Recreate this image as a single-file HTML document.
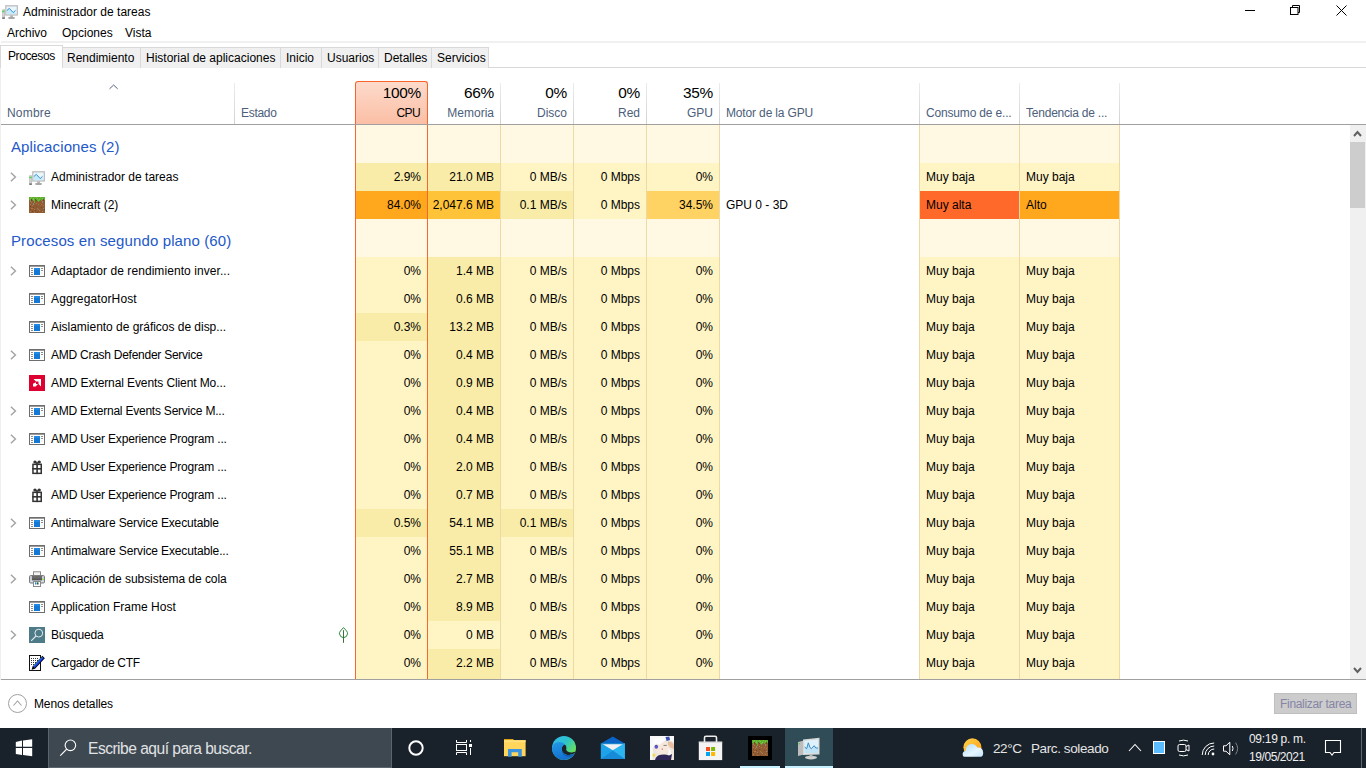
<!DOCTYPE html>
<html><head><meta charset="utf-8"><title>Administrador de tareas</title>
<style>
*{box-sizing:border-box}
html,body{margin:0;padding:0}
body{width:1366px;height:768px;overflow:hidden;position:relative;background:#fff;font-family:"Liberation Sans",sans-serif;font-size:12px;color:#000}
.a{position:absolute;white-space:nowrap}
#lb{position:absolute;left:0;top:68px;width:1px;height:612px;background:#efefef}
.title{left:23px;top:5px;line-height:14px;font-size:12px}
.menu{top:26px;line-height:14px}
#sep{position:absolute;left:1px;top:41px;width:1365px;height:2px;background:#f0f0f0}
.tab{position:absolute;top:47px;height:21px;background:#f0f0f0;border:1px solid #d9d9d9;border-bottom:none;line-height:21px;padding-left:5px}
.tab.act{top:45px;height:23px;background:#fff;line-height:20px;letter-spacing:-0.4px}
#tabline{position:absolute;left:1px;top:67px;width:1365px;height:1px;background:#d9d9d9}
.hd{position:absolute;top:83px;width:1px;height:41px;background:linear-gradient(#ececec,#d2d2d2)}
.hl{position:absolute;top:106px;line-height:14px;color:#4c607a}
.hp{position:absolute;top:85px;line-height:16px;font-size:15.4px;letter-spacing:-0.3px;color:#000;text-align:right}
#hline{position:absolute;left:1px;top:124px;width:1365px;height:1px;background:#a0a0a0}
#cpuh{position:absolute;left:355px;top:81px;width:73px;height:44px;border:1px solid #f8632a;border-bottom:none;border-radius:3px 3px 0 0;background:linear-gradient(#fddacb,#fbbea4)}
.row,.sec{position:absolute;left:0;width:1350px;height:28px}
.sec{height:38px}
.st{position:absolute;left:11px;top:13px;letter-spacing:0.12px;font-size:15px;line-height:17px;color:#2358c9}
.exp{position:absolute;left:9.5px;top:9px}
.ico{position:absolute;left:29px;top:6px;width:16px;height:16px}
.ico svg{display:block}
.nm{position:absolute;left:51px;top:7px;line-height:14px;white-space:nowrap}
.leaf{position:absolute;left:338px;top:6px}
.eng{position:absolute;left:726px;top:7px;line-height:14px}
.c{position:absolute;top:0;height:100%;font-style:normal;line-height:28px;text-align:right;padding-right:6px;white-space:nowrap}
.cpu{left:356px;width:71px}
.mem{left:428px;width:72px}
.dsk{left:501px;width:72px}
.net{left:574px;width:72px}
.gpu{left:647px;width:72px}
.con{left:920px;width:99px;text-align:left;padding-left:6px}
.ten{left:1020px;width:99px;text-align:left;padding-left:6px}
.vl{position:absolute;top:125px;height:554px;width:1px;background:#ecd9a4}
.vo{position:absolute;top:125px;height:554px;width:1px;background:#f8672b}
#tbl{position:absolute;left:0;top:0;width:1366px;height:679px;overflow:hidden}
#bline{position:absolute;left:1px;top:679px;width:1365px;height:1px;background:#a0a0a0}
#sb{position:absolute;left:1350px;top:125px;width:16px;height:554px;background:#f0f0f0}
#thumb{position:absolute;left:1350px;top:142px;width:15px;height:66px;background:#cdcdcd}
#taskbar{position:absolute;left:0;top:728px;width:1366px;height:40px;background:#19212a}
.tw{color:#fff}
</style></head><body>
<div id="lb"></div>
<!-- title bar -->
<svg class="a" style="left:2px;top:3px" width="16" height="16" viewBox="0 0 16 16"><rect x="3.8" y="2.8" width="11.5" height="9.2" fill="#e9f6fc" stroke="#b8b8b8" stroke-width="1.2"/><path d="M4.7 7.6 L7.3 5.3 L11.2 9.4 L13.6 7.4 V11.2 H4.7 Z" fill="#c4e9fa"/><path d="M4.8 7.6 L7.3 5.35 L11.2 9.5 L13.5 7.4" fill="none" stroke="#2a86c6" stroke-width="0.9"/><rect x="8.2" y="12.4" width="2.7" height="1.9" fill="#b0b0b0"/><rect x="6.2" y="14.1" width="6.7" height="1.8" rx="0.8" fill="#a8a8a8"/><rect x="0.2" y="6.2" width="2.7" height="9.7" rx="0.8" fill="#b9b9b9"/><rect x="0.8" y="6.6" width="1.4" height="8.4" fill="#d4d4d4"/><rect x="0.5" y="7.7" width="2" height="1.5" fill="#33dd33"/><rect x="0.3" y="14.4" width="2.5" height="1.5" fill="#707070"/></svg>
<div class="a title">Administrador de tareas</div>
<svg class="a" style="left:1245px;top:10px" width="10" height="1"><rect x="0" y="0" width="10" height="1" fill="#000"/></svg>
<svg class="a" style="left:1290px;top:5px" width="10" height="10" viewBox="0 0 10 10"><path d="M2.5 2 V0.5 H9.5 V7.5 H8" fill="none" stroke="#000" stroke-width="1"/><rect x="0.5" y="2.5" width="7.5" height="7" fill="#fff" stroke="#000" stroke-width="1"/></svg>
<svg class="a" style="left:1336px;top:5px" width="11" height="11" viewBox="0 0 11 11"><path d="M0.5 0.5 L10.5 10.5 M10.5 0.5 L0.5 10.5" stroke="#000" stroke-width="1"/></svg>
<!-- menu -->
<div class="a menu" style="left:7px">Archivo</div>
<div class="a menu" style="left:62px">Opciones</div>
<div class="a menu" style="left:125px">Vista</div>
<div id="sep"></div>
<!-- tabs -->
<div id="tabline"></div>
<div class="tab" style="left:62px;width:79px;padding-left:4px">Rendimiento</div>
<div class="tab" style="left:140px;width:141px">Historial de aplicaciones</div>
<div class="tab" style="left:280px;width:42px">Inicio</div>
<div class="tab" style="left:321px;width:58px">Usuarios</div>
<div class="tab" style="left:378px;width:54px">Detalles</div>
<div class="tab" style="left:431px;width:58px">Servicios</div>
<div class="tab act" style="left:0px;width:63px;padding-left:7px">Procesos</div>

<div id="tbl">
<!-- header -->
<div id="cpuh"></div>
<svg class="a" style="left:109px;top:84px" width="10" height="6" viewBox="0 0 10 6"><path d="M0.5 4.9 L4.6 1 L8.7 4.9" fill="none" stroke="#56637e" stroke-width="1"/></svg>
<div class="hl" style="left:7px;letter-spacing:0.2px">Nombre</div>
<div class="hd" style="left:234px"></div>
<div class="hl" style="left:241px;letter-spacing:-0.3px">Estado</div>
<div class="hp" style="left:356px;width:65px">100%</div>
<div class="hl" style="left:356px;width:64px;text-align:right;color:#000;letter-spacing:-0.6px">CPU</div>
<div class="hp" style="left:428px;width:66px">66%</div>
<div class="hl" style="left:428px;width:66px;text-align:right">Memoria</div>
<div class="hd" style="left:500px"></div>
<div class="hp" style="left:501px;width:66px">0%</div>
<div class="hl" style="left:501px;width:66px;text-align:right">Disco</div>
<div class="hd" style="left:573px"></div>
<div class="hp" style="left:574px;width:66px">0%</div>
<div class="hl" style="left:574px;width:66px;text-align:right">Red</div>
<div class="hd" style="left:646px"></div>
<div class="hp" style="left:647px;width:66px">35%</div>
<div class="hl" style="left:647px;width:66px;text-align:right">GPU</div>
<div class="hd" style="left:719px"></div>
<div class="hl" style="left:726px;letter-spacing:-0.15px">Motor de la GPU</div>
<div class="hd" style="left:919px"></div>
<div class="hl" style="left:926px;letter-spacing:-0.17px">Consumo de e...</div>
<div class="hd" style="left:1019px"></div>
<div class="hl" style="left:1026px;letter-spacing:-0.22px">Tendencia de ...</div>
<div class="hd" style="left:1119px"></div>
<div id="hline"></div>
<!-- rows -->
<div class="sec" style="top:125px"><span class="st">Aplicaciones (2)</span><i class="c cpu" style="background:#FFF8E2"></i><i class="c mem" style="background:#FFF8E2"></i><i class="c dsk" style="background:#FFF8E2"></i><i class="c net" style="background:#FFF8E2"></i><i class="c gpu" style="background:#FFF8E2"></i><i class="c con" style="background:#FFF8E2"></i><i class="c ten" style="background:#FFF8E2"></i></div>
<div class="row" style="top:163px"><svg class="exp" width="7" height="10" viewBox="0 0 7 10"><path d="M0.9 0.8 L5.4 5 L0.9 9.2" fill="none" stroke="#a6a6a6" stroke-width="1.5"/></svg><span class="ico"><svg width="16" height="16" viewBox="0 0 16 16"><rect x="3.8" y="2.8" width="11.5" height="9.2" fill="#e9f6fc" stroke="#b8b8b8" stroke-width="1.2"/><path d="M4.7 7.6 L7.3 5.3 L11.2 9.4 L13.6 7.4 V11.2 H4.7 Z" fill="#c4e9fa"/><path d="M4.8 7.6 L7.3 5.35 L11.2 9.5 L13.5 7.4" fill="none" stroke="#2a86c6" stroke-width="0.9"/><rect x="8.2" y="12.4" width="2.7" height="1.9" fill="#b0b0b0"/><rect x="6.2" y="14.1" width="6.7" height="1.8" rx="0.8" fill="#a8a8a8"/><rect x="0.2" y="6.2" width="2.7" height="9.7" rx="0.8" fill="#b9b9b9"/><rect x="0.8" y="6.6" width="1.4" height="8.4" fill="#d4d4d4"/><rect x="0.5" y="7.7" width="2" height="1.5" fill="#33dd33"/><rect x="0.3" y="14.4" width="2.5" height="1.5" fill="#707070"/></svg></span><span class="nm">Administrador de tareas</span><i class="c cpu" style="background:#F9ECA8">2.9%</i><i class="c mem" style="background:#F9ECA8">21.0 MB</i><i class="c dsk" style="background:#FFF4C4">0 MB/s</i><i class="c net" style="background:#FFF4C4">0 Mbps</i><i class="c gpu" style="background:#FFF4C4">0%</i><i class="c con" style="background:#FFF4C4">Muy baja</i><i class="c ten" style="background:#FFF4C4">Muy baja</i></div>
<div class="row" style="top:191px"><svg class="exp" width="7" height="10" viewBox="0 0 7 10"><path d="M0.9 0.8 L5.4 5 L0.9 9.2" fill="none" stroke="#a6a6a6" stroke-width="1.5"/></svg><span class="ico"><svg width="16" height="16" viewBox="0 0 16 16" shape-rendering="crispEdges"><rect width="16" height="16" fill="#8f5c33"/><rect x="0" y="0" width="1" height="1" fill="#5fae30"/><rect x="1" y="0" width="1" height="1" fill="#5fae30"/><rect x="2" y="0" width="1" height="1" fill="#78c640"/><rect x="3" y="0" width="1" height="1" fill="#5fae30"/><rect x="4" y="0" width="1" height="1" fill="#5fae30"/><rect x="5" y="0" width="1" height="1" fill="#5fae30"/><rect x="6" y="0" width="1" height="1" fill="#5fae30"/><rect x="7" y="0" width="1" height="1" fill="#78c640"/><rect x="8" y="0" width="1" height="1" fill="#5fae30"/><rect x="9" y="0" width="1" height="1" fill="#5fae30"/><rect x="10" y="0" width="1" height="1" fill="#5fae30"/><rect x="11" y="0" width="1" height="1" fill="#78c640"/><rect x="12" y="0" width="1" height="1" fill="#5fae30"/><rect x="13" y="0" width="1" height="1" fill="#5fae30"/><rect x="14" y="0" width="1" height="1" fill="#5fae30"/><rect x="15" y="0" width="1" height="1" fill="#5fae30"/><rect x="0" y="1" width="1" height="1" fill="#5fae30"/><rect x="1" y="1" width="1" height="1" fill="#78c640"/><rect x="2" y="1" width="1" height="1" fill="#5fae30"/><rect x="3" y="1" width="1" height="1" fill="#5fae30"/><rect x="4" y="1" width="1" height="1" fill="#78c640"/><rect x="5" y="1" width="1" height="1" fill="#5fae30"/><rect x="6" y="1" width="1" height="1" fill="#5fae30"/><rect x="7" y="1" width="1" height="1" fill="#5fae30"/><rect x="8" y="1" width="1" height="1" fill="#78c640"/><rect x="9" y="1" width="1" height="1" fill="#5fae30"/><rect x="10" y="1" width="1" height="1" fill="#5fae30"/><rect x="11" y="1" width="1" height="1" fill="#5fae30"/><rect x="12" y="1" width="1" height="1" fill="#5fae30"/><rect x="13" y="1" width="1" height="1" fill="#78c640"/><rect x="14" y="1" width="1" height="1" fill="#5fae30"/><rect x="15" y="1" width="1" height="1" fill="#5fae30"/><rect x="0" y="2" width="1" height="1" fill="#5fae30"/><rect x="1" y="2" width="1" height="1" fill="#5fae30"/><rect x="2" y="2" width="1" height="1" fill="#74492a"/><rect x="3" y="2" width="1" height="1" fill="#5fae30"/><rect x="4" y="2" width="1" height="1" fill="#78c640"/><rect x="5" y="2" width="1" height="1" fill="#5fae30"/><rect x="6" y="2" width="1" height="1" fill="#74492a"/><rect x="7" y="2" width="1" height="1" fill="#5fae30"/><rect x="8" y="2" width="1" height="1" fill="#5fae30"/><rect x="9" y="2" width="1" height="1" fill="#5fae30"/><rect x="10" y="2" width="1" height="1" fill="#78c640"/><rect x="11" y="2" width="1" height="1" fill="#5fae30"/><rect x="12" y="2" width="1" height="1" fill="#5fae30"/><rect x="13" y="2" width="1" height="1" fill="#5fae30"/><rect x="14" y="2" width="1" height="1" fill="#74492a"/><rect x="15" y="2" width="1" height="1" fill="#5fae30"/><rect x="1" y="3" width="1" height="1" fill="#5fae30"/><rect x="2" y="3" width="1" height="1" fill="#74492a"/><rect x="4" y="3" width="1" height="1" fill="#5fae30"/><rect x="5" y="3" width="1" height="1" fill="#5fae30"/><rect x="7" y="3" width="1" height="1" fill="#74492a"/><rect x="8" y="3" width="1" height="1" fill="#5fae30"/><rect x="9" y="3" width="1" height="1" fill="#78c640"/><rect x="10" y="3" width="1" height="1" fill="#5fae30"/><rect x="12" y="3" width="1" height="1" fill="#5fae30"/><rect x="14" y="3" width="1" height="1" fill="#74492a"/><rect x="1" y="4" width="1" height="1" fill="#8a8488"/><rect x="5" y="4" width="1" height="1" fill="#5fae30"/><rect x="9" y="4" width="1" height="1" fill="#5fae30"/><rect x="13" y="4" width="1" height="1" fill="#8a8488"/><rect x="2" y="5" width="1" height="1" fill="#b5743f"/><rect x="5" y="5" width="1" height="1" fill="#5fae30"/><rect x="13" y="5" width="1" height="1" fill="#8a8488"/><rect x="4" y="6" width="1" height="1" fill="#8a8488"/><rect x="7" y="6" width="1" height="1" fill="#b5743f"/><rect x="1" y="7" width="1" height="1" fill="#b5743f"/><rect x="4" y="7" width="1" height="1" fill="#8a8488"/><rect x="9" y="7" width="1" height="1" fill="#b5743f"/><rect x="12" y="7" width="1" height="1" fill="#b5743f"/><rect x="3" y="8" width="1" height="1" fill="#b5743f"/><rect x="14" y="8" width="1" height="1" fill="#b5743f"/><rect x="1" y="9" width="1" height="1" fill="#74492a"/><rect x="7" y="9" width="1" height="1" fill="#74492a"/><rect x="4" y="10" width="1" height="1" fill="#74492a"/><rect x="12" y="10" width="1" height="1" fill="#74492a"/><rect x="2" y="11" width="1" height="1" fill="#b5743f"/><rect x="3" y="11" width="1" height="1" fill="#b5743f"/><rect x="8" y="11" width="1" height="1" fill="#b5743f"/><rect x="14" y="11" width="1" height="1" fill="#8a8488"/><rect x="1" y="12" width="1" height="1" fill="#74492a"/><rect x="5" y="12" width="1" height="1" fill="#b5743f"/><rect x="9" y="12" width="1" height="1" fill="#8a8488"/><rect x="15" y="12" width="1" height="1" fill="#74492a"/><rect x="6" y="13" width="1" height="1" fill="#74492a"/><rect x="10" y="13" width="1" height="1" fill="#b5743f"/><rect x="1" y="14" width="1" height="1" fill="#b5743f"/><rect x="3" y="14" width="1" height="1" fill="#74492a"/><rect x="13" y="14" width="1" height="1" fill="#b5743f"/><rect x="5" y="15" width="1" height="1" fill="#b5743f"/><rect x="8" y="15" width="1" height="1" fill="#74492a"/></svg></span><span class="nm">Minecraft (2)</span><i class="c cpu" style="background:#FFA71D">84.0%</i><i class="c mem" style="background:#FFC33A">2,047.6 MB</i><i class="c dsk" style="background:#F9ECA8">0.1 MB/s</i><i class="c net" style="background:#FFF4C4">0 Mbps</i><i class="c gpu" style="background:#FFD264">34.5%</i><span class="eng">GPU 0 - 3D</span><i class="c con" style="background:#FF6A2A">Muy alta</i><i class="c ten" style="background:#FFA71D">Alto</i></div>
<div class="sec" style="top:219px"><span class="st">Procesos en segundo plano (60)</span><i class="c cpu" style="background:#FFF8E2"></i><i class="c mem" style="background:#FFF8E2"></i><i class="c dsk" style="background:#FFF8E2"></i><i class="c net" style="background:#FFF8E2"></i><i class="c gpu" style="background:#FFF8E2"></i><i class="c con" style="background:#FFF8E2"></i><i class="c ten" style="background:#FFF8E2"></i></div>
<div class="row" style="top:257px"><svg class="exp" width="7" height="10" viewBox="0 0 7 10"><path d="M0.9 0.8 L5.4 5 L0.9 9.2" fill="none" stroke="#a6a6a6" stroke-width="1.5"/></svg><span class="ico"><svg width="16" height="16" viewBox="0 0 16 16" shape-rendering="crispEdges"><rect x="0" y="2" width="16" height="12" fill="#6e6e6e"/><rect x="1" y="4" width="14" height="9" fill="#fff"/><rect x="1" y="3" width="14" height="1" fill="#9a9a9a"/><rect x="5" y="5" width="6" height="7" fill="#1479d6"/><rect x="5" y="5" width="6" height="2" fill="#2288e2"/><rect x="2" y="5" width="2" height="1" fill="#8c8c8c"/><rect x="2" y="7" width="2" height="1" fill="#8c8c8c"/><rect x="2" y="9" width="2" height="1" fill="#8c8c8c"/><rect x="2" y="11" width="2" height="1" fill="#8c8c8c"/><rect x="12" y="5" width="2" height="1" fill="#8c8c8c"/><rect x="12" y="7" width="2" height="1" fill="#8c8c8c"/><rect x="12" y="9" width="2" height="2" fill="#f4f4f4"/></svg></span><span class="nm" style="letter-spacing:0.072px">Adaptador de rendimiento inver...</span><i class="c cpu" style="background:#FFF4C4">0%</i><i class="c mem" style="background:#F9ECA8">1.4 MB</i><i class="c dsk" style="background:#FFF4C4">0 MB/s</i><i class="c net" style="background:#FFF4C4">0 Mbps</i><i class="c gpu" style="background:#FFF4C4">0%</i><i class="c con" style="background:#FFF4C4">Muy baja</i><i class="c ten" style="background:#FFF4C4">Muy baja</i></div>
<div class="row" style="top:285px"><span class="ico"><svg width="16" height="16" viewBox="0 0 16 16" shape-rendering="crispEdges"><rect x="0" y="2" width="16" height="12" fill="#6e6e6e"/><rect x="1" y="4" width="14" height="9" fill="#fff"/><rect x="1" y="3" width="14" height="1" fill="#9a9a9a"/><rect x="5" y="5" width="6" height="7" fill="#1479d6"/><rect x="5" y="5" width="6" height="2" fill="#2288e2"/><rect x="2" y="5" width="2" height="1" fill="#8c8c8c"/><rect x="2" y="7" width="2" height="1" fill="#8c8c8c"/><rect x="2" y="9" width="2" height="1" fill="#8c8c8c"/><rect x="2" y="11" width="2" height="1" fill="#8c8c8c"/><rect x="12" y="5" width="2" height="1" fill="#8c8c8c"/><rect x="12" y="7" width="2" height="1" fill="#8c8c8c"/><rect x="12" y="9" width="2" height="2" fill="#f4f4f4"/></svg></span><span class="nm" style="letter-spacing:0.123px">AggregatorHost</span><i class="c cpu" style="background:#FFF4C4">0%</i><i class="c mem" style="background:#F9ECA8">0.6 MB</i><i class="c dsk" style="background:#FFF4C4">0 MB/s</i><i class="c net" style="background:#FFF4C4">0 Mbps</i><i class="c gpu" style="background:#FFF4C4">0%</i><i class="c con" style="background:#FFF4C4">Muy baja</i><i class="c ten" style="background:#FFF4C4">Muy baja</i></div>
<div class="row" style="top:313px"><span class="ico"><svg width="16" height="16" viewBox="0 0 16 16" shape-rendering="crispEdges"><rect x="0" y="2" width="16" height="12" fill="#6e6e6e"/><rect x="1" y="4" width="14" height="9" fill="#fff"/><rect x="1" y="3" width="14" height="1" fill="#9a9a9a"/><rect x="5" y="5" width="6" height="7" fill="#1479d6"/><rect x="5" y="5" width="6" height="2" fill="#2288e2"/><rect x="2" y="5" width="2" height="1" fill="#8c8c8c"/><rect x="2" y="7" width="2" height="1" fill="#8c8c8c"/><rect x="2" y="9" width="2" height="1" fill="#8c8c8c"/><rect x="2" y="11" width="2" height="1" fill="#8c8c8c"/><rect x="12" y="5" width="2" height="1" fill="#8c8c8c"/><rect x="12" y="7" width="2" height="1" fill="#8c8c8c"/><rect x="12" y="9" width="2" height="2" fill="#f4f4f4"/></svg></span><span class="nm" style="letter-spacing:-0.027px">Aislamiento de gráficos de disp...</span><i class="c cpu" style="background:#F9ECA8">0.3%</i><i class="c mem" style="background:#F9ECA8">13.2 MB</i><i class="c dsk" style="background:#FFF4C4">0 MB/s</i><i class="c net" style="background:#FFF4C4">0 Mbps</i><i class="c gpu" style="background:#FFF4C4">0%</i><i class="c con" style="background:#FFF4C4">Muy baja</i><i class="c ten" style="background:#FFF4C4">Muy baja</i></div>
<div class="row" style="top:341px"><svg class="exp" width="7" height="10" viewBox="0 0 7 10"><path d="M0.9 0.8 L5.4 5 L0.9 9.2" fill="none" stroke="#a6a6a6" stroke-width="1.5"/></svg><span class="ico"><svg width="16" height="16" viewBox="0 0 16 16" shape-rendering="crispEdges"><rect x="0" y="2" width="16" height="12" fill="#6e6e6e"/><rect x="1" y="4" width="14" height="9" fill="#fff"/><rect x="1" y="3" width="14" height="1" fill="#9a9a9a"/><rect x="5" y="5" width="6" height="7" fill="#1479d6"/><rect x="5" y="5" width="6" height="2" fill="#2288e2"/><rect x="2" y="5" width="2" height="1" fill="#8c8c8c"/><rect x="2" y="7" width="2" height="1" fill="#8c8c8c"/><rect x="2" y="9" width="2" height="1" fill="#8c8c8c"/><rect x="2" y="11" width="2" height="1" fill="#8c8c8c"/><rect x="12" y="5" width="2" height="1" fill="#8c8c8c"/><rect x="12" y="7" width="2" height="1" fill="#8c8c8c"/><rect x="12" y="9" width="2" height="2" fill="#f4f4f4"/></svg></span><span class="nm" style="letter-spacing:-0.256px">AMD Crash Defender Service</span><i class="c cpu" style="background:#FFF4C4">0%</i><i class="c mem" style="background:#F9ECA8">0.4 MB</i><i class="c dsk" style="background:#FFF4C4">0 MB/s</i><i class="c net" style="background:#FFF4C4">0 Mbps</i><i class="c gpu" style="background:#FFF4C4">0%</i><i class="c con" style="background:#FFF4C4">Muy baja</i><i class="c ten" style="background:#FFF4C4">Muy baja</i></div>
<div class="row" style="top:369px"><span class="ico"><svg width="16" height="16" viewBox="0 0 16 16"><rect width="16" height="16" fill="#DE0030"/><path d="M4.5 4 H12 V11.5 L9.5 9 V6.5 H7 Z" fill="#fff"/><path d="M7 7.2 V9 H9 L6.6 11.4 H4 V8.8 Z" fill="#fff"/></svg></span><span class="nm" style="letter-spacing:-0.100px">AMD External Events Client Mo...</span><i class="c cpu" style="background:#FFF4C4">0%</i><i class="c mem" style="background:#F9ECA8">0.9 MB</i><i class="c dsk" style="background:#FFF4C4">0 MB/s</i><i class="c net" style="background:#FFF4C4">0 Mbps</i><i class="c gpu" style="background:#FFF4C4">0%</i><i class="c con" style="background:#FFF4C4">Muy baja</i><i class="c ten" style="background:#FFF4C4">Muy baja</i></div>
<div class="row" style="top:397px"><svg class="exp" width="7" height="10" viewBox="0 0 7 10"><path d="M0.9 0.8 L5.4 5 L0.9 9.2" fill="none" stroke="#a6a6a6" stroke-width="1.5"/></svg><span class="ico"><svg width="16" height="16" viewBox="0 0 16 16" shape-rendering="crispEdges"><rect x="0" y="2" width="16" height="12" fill="#6e6e6e"/><rect x="1" y="4" width="14" height="9" fill="#fff"/><rect x="1" y="3" width="14" height="1" fill="#9a9a9a"/><rect x="5" y="5" width="6" height="7" fill="#1479d6"/><rect x="5" y="5" width="6" height="2" fill="#2288e2"/><rect x="2" y="5" width="2" height="1" fill="#8c8c8c"/><rect x="2" y="7" width="2" height="1" fill="#8c8c8c"/><rect x="2" y="9" width="2" height="1" fill="#8c8c8c"/><rect x="2" y="11" width="2" height="1" fill="#8c8c8c"/><rect x="12" y="5" width="2" height="1" fill="#8c8c8c"/><rect x="12" y="7" width="2" height="1" fill="#8c8c8c"/><rect x="12" y="9" width="2" height="2" fill="#f4f4f4"/></svg></span><span class="nm" style="letter-spacing:-0.226px">AMD External Events Service M...</span><i class="c cpu" style="background:#FFF4C4">0%</i><i class="c mem" style="background:#F9ECA8">0.4 MB</i><i class="c dsk" style="background:#FFF4C4">0 MB/s</i><i class="c net" style="background:#FFF4C4">0 Mbps</i><i class="c gpu" style="background:#FFF4C4">0%</i><i class="c con" style="background:#FFF4C4">Muy baja</i><i class="c ten" style="background:#FFF4C4">Muy baja</i></div>
<div class="row" style="top:425px"><svg class="exp" width="7" height="10" viewBox="0 0 7 10"><path d="M0.9 0.8 L5.4 5 L0.9 9.2" fill="none" stroke="#a6a6a6" stroke-width="1.5"/></svg><span class="ico"><svg width="16" height="16" viewBox="0 0 16 16" shape-rendering="crispEdges"><rect x="0" y="2" width="16" height="12" fill="#6e6e6e"/><rect x="1" y="4" width="14" height="9" fill="#fff"/><rect x="1" y="3" width="14" height="1" fill="#9a9a9a"/><rect x="5" y="5" width="6" height="7" fill="#1479d6"/><rect x="5" y="5" width="6" height="2" fill="#2288e2"/><rect x="2" y="5" width="2" height="1" fill="#8c8c8c"/><rect x="2" y="7" width="2" height="1" fill="#8c8c8c"/><rect x="2" y="9" width="2" height="1" fill="#8c8c8c"/><rect x="2" y="11" width="2" height="1" fill="#8c8c8c"/><rect x="12" y="5" width="2" height="1" fill="#8c8c8c"/><rect x="12" y="7" width="2" height="1" fill="#8c8c8c"/><rect x="12" y="9" width="2" height="2" fill="#f4f4f4"/></svg></span><span class="nm" style="letter-spacing:-0.183px">AMD User Experience Program ...</span><i class="c cpu" style="background:#FFF4C4">0%</i><i class="c mem" style="background:#F9ECA8">0.4 MB</i><i class="c dsk" style="background:#FFF4C4">0 MB/s</i><i class="c net" style="background:#FFF4C4">0 Mbps</i><i class="c gpu" style="background:#FFF4C4">0%</i><i class="c con" style="background:#FFF4C4">Muy baja</i><i class="c ten" style="background:#FFF4C4">Muy baja</i></div>
<div class="row" style="top:453px"><span class="ico"><svg width="16" height="16" viewBox="0 0 16 16"><rect x="3.95" y="5.35" width="8.3" height="9" fill="#fff" stroke="#333" stroke-width="1.5"/><rect x="7.3" y="4.6" width="1.6" height="10.5" fill="#333"/><rect x="3.2" y="9" width="9.8" height="1.6" fill="#333"/><ellipse cx="6" cy="2.9" rx="1.7" ry="1.5" fill="#333"/><ellipse cx="10.2" cy="2.9" rx="1.7" ry="1.5" fill="#333"/><rect x="6.8" y="3.2" width="2.6" height="1.6" fill="#333"/></svg></span><span class="nm" style="letter-spacing:-0.183px">AMD User Experience Program ...</span><i class="c cpu" style="background:#FFF4C4">0%</i><i class="c mem" style="background:#F9ECA8">2.0 MB</i><i class="c dsk" style="background:#FFF4C4">0 MB/s</i><i class="c net" style="background:#FFF4C4">0 Mbps</i><i class="c gpu" style="background:#FFF4C4">0%</i><i class="c con" style="background:#FFF4C4">Muy baja</i><i class="c ten" style="background:#FFF4C4">Muy baja</i></div>
<div class="row" style="top:481px"><span class="ico"><svg width="16" height="16" viewBox="0 0 16 16"><rect x="3.95" y="5.35" width="8.3" height="9" fill="#fff" stroke="#333" stroke-width="1.5"/><rect x="7.3" y="4.6" width="1.6" height="10.5" fill="#333"/><rect x="3.2" y="9" width="9.8" height="1.6" fill="#333"/><ellipse cx="6" cy="2.9" rx="1.7" ry="1.5" fill="#333"/><ellipse cx="10.2" cy="2.9" rx="1.7" ry="1.5" fill="#333"/><rect x="6.8" y="3.2" width="2.6" height="1.6" fill="#333"/></svg></span><span class="nm" style="letter-spacing:-0.183px">AMD User Experience Program ...</span><i class="c cpu" style="background:#FFF4C4">0%</i><i class="c mem" style="background:#F9ECA8">0.7 MB</i><i class="c dsk" style="background:#FFF4C4">0 MB/s</i><i class="c net" style="background:#FFF4C4">0 Mbps</i><i class="c gpu" style="background:#FFF4C4">0%</i><i class="c con" style="background:#FFF4C4">Muy baja</i><i class="c ten" style="background:#FFF4C4">Muy baja</i></div>
<div class="row" style="top:509px"><svg class="exp" width="7" height="10" viewBox="0 0 7 10"><path d="M0.9 0.8 L5.4 5 L0.9 9.2" fill="none" stroke="#a6a6a6" stroke-width="1.5"/></svg><span class="ico"><svg width="16" height="16" viewBox="0 0 16 16" shape-rendering="crispEdges"><rect x="0" y="2" width="16" height="12" fill="#6e6e6e"/><rect x="1" y="4" width="14" height="9" fill="#fff"/><rect x="1" y="3" width="14" height="1" fill="#9a9a9a"/><rect x="5" y="5" width="6" height="7" fill="#1479d6"/><rect x="5" y="5" width="6" height="2" fill="#2288e2"/><rect x="2" y="5" width="2" height="1" fill="#8c8c8c"/><rect x="2" y="7" width="2" height="1" fill="#8c8c8c"/><rect x="2" y="9" width="2" height="1" fill="#8c8c8c"/><rect x="2" y="11" width="2" height="1" fill="#8c8c8c"/><rect x="12" y="5" width="2" height="1" fill="#8c8c8c"/><rect x="12" y="7" width="2" height="1" fill="#8c8c8c"/><rect x="12" y="9" width="2" height="2" fill="#f4f4f4"/></svg></span><span class="nm" style="letter-spacing:-0.141px">Antimalware Service Executable</span><i class="c cpu" style="background:#F9ECA8">0.5%</i><i class="c mem" style="background:#F9ECA8">54.1 MB</i><i class="c dsk" style="background:#F9ECA8">0.1 MB/s</i><i class="c net" style="background:#FFF4C4">0 Mbps</i><i class="c gpu" style="background:#FFF4C4">0%</i><i class="c con" style="background:#FFF4C4">Muy baja</i><i class="c ten" style="background:#FFF4C4">Muy baja</i></div>
<div class="row" style="top:537px"><span class="ico"><svg width="16" height="16" viewBox="0 0 16 16" shape-rendering="crispEdges"><rect x="0" y="2" width="16" height="12" fill="#6e6e6e"/><rect x="1" y="4" width="14" height="9" fill="#fff"/><rect x="1" y="3" width="14" height="1" fill="#9a9a9a"/><rect x="5" y="5" width="6" height="7" fill="#1479d6"/><rect x="5" y="5" width="6" height="2" fill="#2288e2"/><rect x="2" y="5" width="2" height="1" fill="#8c8c8c"/><rect x="2" y="7" width="2" height="1" fill="#8c8c8c"/><rect x="2" y="9" width="2" height="1" fill="#8c8c8c"/><rect x="2" y="11" width="2" height="1" fill="#8c8c8c"/><rect x="12" y="5" width="2" height="1" fill="#8c8c8c"/><rect x="12" y="7" width="2" height="1" fill="#8c8c8c"/><rect x="12" y="9" width="2" height="2" fill="#f4f4f4"/></svg></span><span class="nm" style="letter-spacing:-0.131px">Antimalware Service Executable...</span><i class="c cpu" style="background:#FFF4C4">0%</i><i class="c mem" style="background:#F9ECA8">55.1 MB</i><i class="c dsk" style="background:#FFF4C4">0 MB/s</i><i class="c net" style="background:#FFF4C4">0 Mbps</i><i class="c gpu" style="background:#FFF4C4">0%</i><i class="c con" style="background:#FFF4C4">Muy baja</i><i class="c ten" style="background:#FFF4C4">Muy baja</i></div>
<div class="row" style="top:565px"><svg class="exp" width="7" height="10" viewBox="0 0 7 10"><path d="M0.9 0.8 L5.4 5 L0.9 9.2" fill="none" stroke="#a6a6a6" stroke-width="1.5"/></svg><span class="ico"><svg width="16" height="16" viewBox="0 0 16 16"><rect x="4.5" y="0.8" width="7" height="4.5" fill="#f4f4f4" stroke="#8a8a8a"/><rect x="0.5" y="4.6" width="15" height="7.4" rx="1" fill="#c8ccd4" stroke="#7a7a7a"/><rect x="3" y="4.8" width="10" height="4.6" fill="#6a6a6a"/><rect x="3" y="7.5" width="10" height="2" fill="#555"/><rect x="1" y="9.6" width="14" height="1.2" fill="#dfe3ea"/><rect x="4.5" y="10.5" width="7" height="5" fill="#fff" stroke="#8a8a8a"/><rect x="6" y="11.3" width="1.5" height="2.2" fill="#1e88e5"/><rect x="8" y="11.3" width="1.5" height="2.2" fill="#1b5e20"/><rect x="13.5" y="7.8" width="1.2" height="1.2" fill="#7cfc00"/></svg></span><span class="nm" style="letter-spacing:-0.055px">Aplicación de subsistema de cola</span><i class="c cpu" style="background:#FFF4C4">0%</i><i class="c mem" style="background:#F9ECA8">2.7 MB</i><i class="c dsk" style="background:#FFF4C4">0 MB/s</i><i class="c net" style="background:#FFF4C4">0 Mbps</i><i class="c gpu" style="background:#FFF4C4">0%</i><i class="c con" style="background:#FFF4C4">Muy baja</i><i class="c ten" style="background:#FFF4C4">Muy baja</i></div>
<div class="row" style="top:593px"><span class="ico"><svg width="16" height="16" viewBox="0 0 16 16" shape-rendering="crispEdges"><rect x="0" y="2" width="16" height="12" fill="#6e6e6e"/><rect x="1" y="4" width="14" height="9" fill="#fff"/><rect x="1" y="3" width="14" height="1" fill="#9a9a9a"/><rect x="5" y="5" width="6" height="7" fill="#1479d6"/><rect x="5" y="5" width="6" height="2" fill="#2288e2"/><rect x="2" y="5" width="2" height="1" fill="#8c8c8c"/><rect x="2" y="7" width="2" height="1" fill="#8c8c8c"/><rect x="2" y="9" width="2" height="1" fill="#8c8c8c"/><rect x="2" y="11" width="2" height="1" fill="#8c8c8c"/><rect x="12" y="5" width="2" height="1" fill="#8c8c8c"/><rect x="12" y="7" width="2" height="1" fill="#8c8c8c"/><rect x="12" y="9" width="2" height="2" fill="#f4f4f4"/></svg></span><span class="nm">Application Frame Host</span><i class="c cpu" style="background:#FFF4C4">0%</i><i class="c mem" style="background:#F9ECA8">8.9 MB</i><i class="c dsk" style="background:#FFF4C4">0 MB/s</i><i class="c net" style="background:#FFF4C4">0 Mbps</i><i class="c gpu" style="background:#FFF4C4">0%</i><i class="c con" style="background:#FFF4C4">Muy baja</i><i class="c ten" style="background:#FFF4C4">Muy baja</i></div>
<div class="row" style="top:621px"><svg class="exp" width="7" height="10" viewBox="0 0 7 10"><path d="M0.9 0.8 L5.4 5 L0.9 9.2" fill="none" stroke="#a6a6a6" stroke-width="1.5"/></svg><span class="ico"><svg width="16" height="16" viewBox="0 0 16 16"><rect width="16" height="16" fill="#4e7b88"/><circle cx="9.8" cy="6.1" r="3.9" fill="none" stroke="#e3eaec" stroke-width="1"/><path d="M7 9 L2.2 13.8" stroke="#e3eaec" stroke-width="1.1"/></svg></span><span class="nm" style="letter-spacing:-0.186px">Búsqueda</span><svg class="leaf" width="11" height="16" viewBox="0 0 11 16"><path d="M5.5 0.6 L8.5 3.9 Q9.7 5.3 9.5 6.9 Q9 10.4 5.5 10.7 Q2 10.4 1.5 6.9 Q1.3 5.3 2.5 3.9 Z" fill="none" stroke="#2e8b3a" stroke-width="1"/><path d="M5.5 3.2 V15.8" stroke="#3a6e3a" stroke-width="1"/></svg><i class="c cpu" style="background:#FFF4C4">0%</i><i class="c mem" style="background:#FFF4C4">0 MB</i><i class="c dsk" style="background:#FFF4C4">0 MB/s</i><i class="c net" style="background:#FFF4C4">0 Mbps</i><i class="c gpu" style="background:#FFF4C4">0%</i><i class="c con" style="background:#FFF4C4">Muy baja</i><i class="c ten" style="background:#FFF4C4">Muy baja</i></div>
<div class="row" style="top:649px"><span class="ico"><svg width="16" height="16" viewBox="0 0 16 16"><rect x="0.5" y="0.5" width="11" height="15" fill="#fff" stroke="#111" stroke-width="1"/><g fill="#333"><rect x="2" y="3" width="1" height="1"/><rect x="4" y="3" width="1" height="1"/><rect x="6" y="3" width="1" height="1"/><rect x="8" y="3" width="1" height="1"/><rect x="2" y="5" width="1" height="1"/><rect x="4" y="5" width="1" height="1"/><rect x="6" y="5" width="1" height="1"/><rect x="8" y="5" width="1" height="1"/><rect x="2" y="7" width="1" height="1"/><rect x="4" y="7" width="1" height="1"/><rect x="6" y="7" width="1" height="1"/><rect x="2" y="9" width="1" height="1"/><rect x="4" y="9" width="1" height="1"/></g><path d="M2.6 14.8 L3.6 11.4 L13.4 0.8 L15.8 3.2 L6 13.8 Z" fill="#000"/><path d="M4.3 11.8 L13.4 2 L14.6 3.2 L5.5 13 Z" fill="#1a3cff"/><path d="M4.6 11.3 L13 2.3" stroke="#38c8ff" stroke-width="0.7"/></svg></span><span class="nm" style="letter-spacing:-0.314px">Cargador de CTF</span><i class="c cpu" style="background:#FFF4C4">0%</i><i class="c mem" style="background:#F9ECA8">2.2 MB</i><i class="c dsk" style="background:#FFF4C4">0 MB/s</i><i class="c net" style="background:#FFF4C4">0 Mbps</i><i class="c gpu" style="background:#FFF4C4">0%</i><i class="c con" style="background:#FFF4C4">Muy baja</i><i class="c ten" style="background:#FFF4C4">Muy baja</i></div>
<div class="row" style="top:677px"><span class="nm"></span><i class="c cpu" style="background:#FFF4C4"></i><i class="c mem" style="background:#F9ECA8"></i><i class="c dsk" style="background:#FFF4C4"></i><i class="c net" style="background:#FFF4C4"></i><i class="c gpu" style="background:#FFF4C4"></i><i class="c con" style="background:#FFF4C4"></i><i class="c ten" style="background:#FFF4C4"></i></div>
<div class="vo" style="left:355px"></div>
<div class="vo" style="left:427px"></div>
<div class="vl" style="left:500px"></div>
<div class="vl" style="left:573px"></div>
<div class="vl" style="left:646px"></div>
<div class="vl" style="left:719px"></div>
<div class="vl" style="left:919px"></div>
<div class="vl" style="left:1019px"></div>
<div class="vl" style="left:1119px"></div>
<div id="sb"></div>
<div id="thumb"></div>
<svg class="a" style="left:1353px;top:130px" width="9" height="7" viewBox="0 0 9 7"><path d="M1 6 L4.5 2 L8 6" fill="none" stroke="#606060" stroke-width="2"/></svg>
<svg class="a" style="left:1353px;top:667px" width="9" height="7" viewBox="0 0 9 7"><path d="M1 1 L4.5 5 L8 1" fill="none" stroke="#606060" stroke-width="2"/></svg>
</div>
<div id="bline"></div>
<!-- footer -->
<svg class="a" style="left:8px;top:694px" width="19" height="19" viewBox="0 0 19 19"><circle cx="9.5" cy="9.5" r="9" fill="none" stroke="#a0a0a0" stroke-width="1"/><path d="M5.5 11.5 L9.5 7 L13.5 11.5" fill="none" stroke="#a0a0a0" stroke-width="1.1"/></svg>
<div class="a" style="left:34px;top:697px;line-height:14px;letter-spacing:-0.13px">Menos detalles</div>
<div class="a" style="left:1274px;top:693px;width:83px;height:21px;background:#cccccc;border:1px solid #bfbfbf;color:#8585a5;line-height:21px;padding-left:5px;letter-spacing:-0.31px">Finalizar tarea</div>

<!-- taskbar -->
<div id="taskbar"></div>
<!-- start -->
<svg class="a" style="left:15px;top:739px" width="18" height="18" viewBox="0 0 18 18"><g fill="#fff"><path d="M0.8 2.9 L7 1.6 V7.8 H0.8 Z"/><path d="M8 1.4 L17.2 0.2 V7.8 H8 Z"/><path d="M0.8 9 H7 V15.9 L0.8 15.1 Z"/><path d="M8 9 H17.2 V17.2 L8 16.1 Z"/></g></svg>
<!-- search box -->
<div class="a" style="left:48px;top:728px;width:344px;height:40px;background:#3e4851;border-left:1px solid #5b656d;border-right:1px solid #5b656d;border-bottom:1px solid #5b656d"></div>
<svg class="a" style="left:58px;top:738px" width="20" height="20" viewBox="0 0 20 20"><circle cx="12.4" cy="7.3" r="5.3" fill="none" stroke="#fff" stroke-width="1.1"/><path d="M8.7 11.1 L2.3 17.6" stroke="#fff" stroke-width="1.2"/></svg>
<div class="a" style="left:88px;top:740px;font-size:15.6px;line-height:17px;color:#e0e2e4;letter-spacing:-0.52px">Escribe aquí para buscar.</div>
<!-- cortana -->
<svg class="a" style="left:407px;top:739px" width="18" height="18" viewBox="0 0 18 18"><circle cx="9" cy="9" r="6.7" fill="none" stroke="#fff" stroke-width="2"/></svg>
<!-- task view -->
<svg class="a" style="left:455px;top:739px" width="18" height="18" viewBox="0 0 18 18"><g fill="none" stroke="#fff" stroke-width="1"><path d="M1.5 1 V3.5 H11.5 V1"/><rect x="1.5" y="5.5" width="10" height="6"/><path d="M1.5 16 V13.5 H11.5 V16"/><path d="M15.5 1 V3 M15.5 9 V16"/></g><rect x="14" y="5" width="3" height="3" fill="#fff"/></svg>
<!-- explorer -->
<svg class="a" style="left:504px;top:738px" width="22" height="20" viewBox="0 0 22 20"><path d="M0 1 H9 L10.5 2.6 V4.5 H0 Z" fill="#e0a10a"/><rect x="0" y="2.2" width="21.6" height="16" fill="#ffd55c"/><rect x="0" y="2.2" width="21.6" height="2" fill="#ffe07a"/><path d="M4 18.8 V11 H17.8 V18.8 H14.2 V14.2 H7.6 V18.8 Z" fill="#3b93e0"/></svg>
<!-- edge -->
<svg class="a" style="left:552px;top:736px" width="24" height="24" viewBox="0 0 24 24"><defs><linearGradient id="eg1" x1="0.1" y1="0" x2="0.9" y2="0.7"><stop offset="0" stop-color="#33b8f0"/><stop offset="0.5" stop-color="#2cc4c8"/><stop offset="1" stop-color="#6fe256"/></linearGradient><linearGradient id="eg2" x1="0" y1="0" x2="0.3" y2="1"><stop offset="0" stop-color="#239ae8"/><stop offset="1" stop-color="#1470d0"/></linearGradient></defs><circle cx="12" cy="12" r="12" fill="url(#eg1)"/><path d="M12.8 8.4 C14.5 9.3 14.6 12 14.2 13.8 C15 16 17.5 16.6 20 16.4 C21.5 16.3 22.7 15.9 23.4 15.5 L23 16.8 C21.5 18.2 19 19.2 16.5 19 C12.5 18.8 9.8 16.5 9.7 13.2 C9.7 10.5 11 8.9 12.8 8.4 Z" fill="#1a222a"/><path d="M0 12.5 C0.3 8.8 3.4 6 7.2 6 C9.8 6 12 7 12.8 8.4 C11 8.9 9.7 10.5 9.7 13.2 C9.8 16.5 12.5 18.8 16.5 19 C19 19.2 21.5 18.2 23 16.8 C21.3 21.2 17 24 12 24 C5.4 24 0 18.6 0 12.5 Z" fill="url(#eg2)"/><path d="M9.7 13.2 C9.8 16.5 12.5 18.8 16.5 19 C19 19.2 21.5 18.2 23 16.8 C22.4 18.6 20.8 20 18.6 20.6 C14.6 21.6 10.6 19.6 9.9 15.6 Z" fill="#0d58ad" opacity="0.75"/></svg>
<!-- mail -->
<svg class="a" style="left:600px;top:736px" width="26" height="24" viewBox="0 0 26 24"><path d="M0.8 7.5 L12.8 0.4 L24.8 7.5 Z" fill="#0a64c8"/><rect x="0.8" y="7.3" width="24" height="15.7" fill="#1ea2ea"/><path d="M0.8 23 L12.8 14.5 L24.8 7.3 V23 Z" fill="#2bb6f0"/><path d="M0.8 23 L12.8 14.5 L24.8 23 Z" fill="#178ad8"/><path d="M2.8 8.3 H22.8 L12.8 14.2 Z" fill="#f2f2f2"/></svg>
<!-- anime avatar -->
<svg class="a" style="left:650px;top:736px" width="24" height="24" viewBox="0 0 24 24"><rect width="24" height="24" fill="#eee5dc"/><path d="M0 0 H24 V6 Q18 3 12 5 Q6 6 3 12 L2.5 24 H0 Z" fill="#f8f8f8"/><ellipse cx="11.5" cy="12" rx="7" ry="6.5" fill="#f6e8dc"/><path d="M3.5 3 Q10 0.5 16 4 Q12 6 9.5 9 Q6.5 7 3.5 8.5 Z" fill="#fdfdfd"/><ellipse cx="6.3" cy="10.8" rx="1.8" ry="2" fill="#5656c0"/><path d="M13.5 9.4 H16.8" stroke="#77735a" stroke-width="0.9"/><circle cx="12.3" cy="13.1" r="0.7" fill="#d84a5a"/><path d="M15.5 1 L19.3 0.4 L20 4 L16.6 5 Z" fill="#3a4fb2"/><path d="M18 5.5 Q23 5.5 24 9.5 V13 Q20 12 18 9 Z" fill="#e8bfa0"/><path d="M19 12.5 Q22.5 16 20.5 21 L17.5 19 Q19.3 16 18 13 Z" fill="#f9f9f9"/><path d="M5 24 Q6 19.5 11 18.8 Q16 18.2 19 19.5 L22 18 L21 24 Z" fill="#2d2656"/><path d="M3.9 17 L4.5 18.4 L6 18.5 L4.9 19.5 L5.2 21 L3.9 20.2 L2.6 21 L2.9 19.5 L1.8 18.5 L3.3 18.4 Z" fill="#f2d640"/></svg>
<!-- store -->
<svg class="a" style="left:698px;top:735px" width="25" height="26" viewBox="0 0 25 26"><path d="M6.5 7 V2.8 Q6.5 1.2 8 1.2 H17 Q18.5 1.2 18.5 2.8 V7" fill="none" stroke="#ececec" stroke-width="1.6"/><rect x="0.8" y="6.7" width="23.4" height="18.4" fill="#f4f4f4"/><rect x="0.8" y="6.7" width="23.4" height="1.3" fill="#dcdcdc"/><rect x="8" y="12" width="4" height="4" fill="#f25022"/><rect x="13.1" y="12" width="4" height="4" fill="#7fba00"/><rect x="8" y="17" width="4" height="4" fill="#00a4ef"/><rect x="13.1" y="17" width="4" height="4" fill="#ffb900"/></svg>
<!-- minecraft -->
<div class="a" style="left:748px;top:736px;width:24px;height:24px;background:#000"></div>
<svg class="a" style="left:752px;top:740px" width="16" height="16" viewBox="0 0 16 16" shape-rendering="crispEdges"><rect width="16" height="16" fill="#8f5c33"/><rect x="0" y="0" width="1" height="1" fill="#5fae30"/><rect x="1" y="0" width="1" height="1" fill="#5fae30"/><rect x="2" y="0" width="1" height="1" fill="#78c640"/><rect x="3" y="0" width="1" height="1" fill="#5fae30"/><rect x="4" y="0" width="1" height="1" fill="#5fae30"/><rect x="5" y="0" width="1" height="1" fill="#5fae30"/><rect x="6" y="0" width="1" height="1" fill="#5fae30"/><rect x="7" y="0" width="1" height="1" fill="#78c640"/><rect x="8" y="0" width="1" height="1" fill="#5fae30"/><rect x="9" y="0" width="1" height="1" fill="#5fae30"/><rect x="10" y="0" width="1" height="1" fill="#5fae30"/><rect x="11" y="0" width="1" height="1" fill="#78c640"/><rect x="12" y="0" width="1" height="1" fill="#5fae30"/><rect x="13" y="0" width="1" height="1" fill="#5fae30"/><rect x="14" y="0" width="1" height="1" fill="#5fae30"/><rect x="15" y="0" width="1" height="1" fill="#5fae30"/><rect x="0" y="1" width="1" height="1" fill="#5fae30"/><rect x="1" y="1" width="1" height="1" fill="#78c640"/><rect x="2" y="1" width="1" height="1" fill="#5fae30"/><rect x="3" y="1" width="1" height="1" fill="#5fae30"/><rect x="4" y="1" width="1" height="1" fill="#78c640"/><rect x="5" y="1" width="1" height="1" fill="#5fae30"/><rect x="6" y="1" width="1" height="1" fill="#5fae30"/><rect x="7" y="1" width="1" height="1" fill="#5fae30"/><rect x="8" y="1" width="1" height="1" fill="#78c640"/><rect x="9" y="1" width="1" height="1" fill="#5fae30"/><rect x="10" y="1" width="1" height="1" fill="#5fae30"/><rect x="11" y="1" width="1" height="1" fill="#5fae30"/><rect x="12" y="1" width="1" height="1" fill="#5fae30"/><rect x="13" y="1" width="1" height="1" fill="#78c640"/><rect x="14" y="1" width="1" height="1" fill="#5fae30"/><rect x="15" y="1" width="1" height="1" fill="#5fae30"/><rect x="0" y="2" width="1" height="1" fill="#5fae30"/><rect x="1" y="2" width="1" height="1" fill="#5fae30"/><rect x="2" y="2" width="1" height="1" fill="#74492a"/><rect x="3" y="2" width="1" height="1" fill="#5fae30"/><rect x="4" y="2" width="1" height="1" fill="#78c640"/><rect x="5" y="2" width="1" height="1" fill="#5fae30"/><rect x="6" y="2" width="1" height="1" fill="#74492a"/><rect x="7" y="2" width="1" height="1" fill="#5fae30"/><rect x="8" y="2" width="1" height="1" fill="#5fae30"/><rect x="9" y="2" width="1" height="1" fill="#5fae30"/><rect x="10" y="2" width="1" height="1" fill="#78c640"/><rect x="11" y="2" width="1" height="1" fill="#5fae30"/><rect x="12" y="2" width="1" height="1" fill="#5fae30"/><rect x="13" y="2" width="1" height="1" fill="#5fae30"/><rect x="14" y="2" width="1" height="1" fill="#74492a"/><rect x="15" y="2" width="1" height="1" fill="#5fae30"/><rect x="1" y="3" width="1" height="1" fill="#5fae30"/><rect x="2" y="3" width="1" height="1" fill="#74492a"/><rect x="4" y="3" width="1" height="1" fill="#5fae30"/><rect x="5" y="3" width="1" height="1" fill="#5fae30"/><rect x="7" y="3" width="1" height="1" fill="#74492a"/><rect x="8" y="3" width="1" height="1" fill="#5fae30"/><rect x="9" y="3" width="1" height="1" fill="#78c640"/><rect x="10" y="3" width="1" height="1" fill="#5fae30"/><rect x="12" y="3" width="1" height="1" fill="#5fae30"/><rect x="14" y="3" width="1" height="1" fill="#74492a"/><rect x="1" y="4" width="1" height="1" fill="#8a8488"/><rect x="5" y="4" width="1" height="1" fill="#5fae30"/><rect x="9" y="4" width="1" height="1" fill="#5fae30"/><rect x="13" y="4" width="1" height="1" fill="#8a8488"/><rect x="2" y="5" width="1" height="1" fill="#b5743f"/><rect x="5" y="5" width="1" height="1" fill="#5fae30"/><rect x="13" y="5" width="1" height="1" fill="#8a8488"/><rect x="4" y="6" width="1" height="1" fill="#8a8488"/><rect x="7" y="6" width="1" height="1" fill="#b5743f"/><rect x="1" y="7" width="1" height="1" fill="#b5743f"/><rect x="4" y="7" width="1" height="1" fill="#8a8488"/><rect x="9" y="7" width="1" height="1" fill="#b5743f"/><rect x="12" y="7" width="1" height="1" fill="#b5743f"/><rect x="3" y="8" width="1" height="1" fill="#b5743f"/><rect x="14" y="8" width="1" height="1" fill="#b5743f"/><rect x="1" y="9" width="1" height="1" fill="#74492a"/><rect x="7" y="9" width="1" height="1" fill="#74492a"/><rect x="4" y="10" width="1" height="1" fill="#74492a"/><rect x="12" y="10" width="1" height="1" fill="#74492a"/><rect x="2" y="11" width="1" height="1" fill="#b5743f"/><rect x="3" y="11" width="1" height="1" fill="#b5743f"/><rect x="8" y="11" width="1" height="1" fill="#b5743f"/><rect x="14" y="11" width="1" height="1" fill="#8a8488"/><rect x="1" y="12" width="1" height="1" fill="#74492a"/><rect x="5" y="12" width="1" height="1" fill="#b5743f"/><rect x="9" y="12" width="1" height="1" fill="#8a8488"/><rect x="15" y="12" width="1" height="1" fill="#74492a"/><rect x="6" y="13" width="1" height="1" fill="#74492a"/><rect x="10" y="13" width="1" height="1" fill="#b5743f"/><rect x="1" y="14" width="1" height="1" fill="#b5743f"/><rect x="3" y="14" width="1" height="1" fill="#74492a"/><rect x="13" y="14" width="1" height="1" fill="#b5743f"/><rect x="5" y="15" width="1" height="1" fill="#b5743f"/><rect x="8" y="15" width="1" height="1" fill="#74492a"/></svg>
<div class="a" style="left:740px;top:766px;width:40px;height:2px;background:#c6f0ff"></div>
<!-- task manager active -->
<div class="a" style="left:785px;top:728px;width:48px;height:40px;background:#2f4c57"></div>
<div class="a" style="left:785px;top:766px;width:48px;height:2px;background:#c6f0ff"></div>
<svg class="a" style="left:797px;top:737px" width="24" height="23" viewBox="0 0 24 23"><path d="M1 5 L7 3.5 V17.5 L1 19 Z" fill="#bdbdbd"/><rect x="1.5" y="6" width="1.4" height="1.4" fill="#5c5"/><path d="M6 2.5 L22.5 0.8 V17.5 L6 18 Z" fill="#d8d8d8"/><path d="M7.3 3.8 L21.2 2.4 V16 L7.3 16.6 Z" fill="#dff1fb"/><path d="M7.6 10 L9.7 11.7 L11.3 5.8 L13 10.5 L14.3 11.7 L17.2 8.7 L18.8 11 L21 11 V16 H7.6 Z" fill="#bfe2f4"/><path d="M7.6 10 L9.7 11.7 L11.3 5.8 L13 10.5 L14.3 11.7 L17.2 8.7 L18.8 11 L21 11" fill="none" stroke="#3a8cc8" stroke-width="1"/><ellipse cx="14" cy="20.6" rx="6" ry="1.8" fill="#d0d0d0"/><rect x="12.5" y="17.5" width="3" height="2.5" fill="#bbb"/></svg>
<!-- weather -->
<svg class="a" style="left:962px;top:737px" width="22" height="21" viewBox="0 0 22 21"><defs><linearGradient id="sg" x1="0" y1="0" x2="1" y2="1"><stop offset="0" stop-color="#ffd34a"/><stop offset="1" stop-color="#ff9a10"/></linearGradient><linearGradient id="cg" x1="0" y1="0" x2="1" y2="1"><stop offset="0" stop-color="#a8dcfb"/><stop offset="0.6" stop-color="#e8f6ff"/><stop offset="1" stop-color="#bfe3f8"/></linearGradient></defs><circle cx="10.4" cy="10.3" r="9" fill="url(#sg)"/><path d="M2.5 19.8 Q0.6 19.8 0.6 17.3 Q0.6 14.2 3.6 14 Q4.2 7.2 9.8 7.1 Q13.6 7.1 15.2 10.6 Q21 10.2 21.2 15.8 Q21.2 19.8 18.6 19.8 Z" fill="url(#cg)"/></svg>
<div class="a" style="left:993px;top:741px;font-size:13.5px;line-height:15px;color:#e4e4e4;letter-spacing:-0.4px">22°C</div>
<div class="a" style="left:1031px;top:741px;font-size:13.5px;line-height:15px;color:#e4e4e4;letter-spacing:-0.4px">Parc. soleado</div>
<!-- tray -->
<svg class="a" style="left:1128px;top:743px" width="14" height="9" viewBox="0 0 14 9"><path d="M1 8 L7 1.5 L13 8" fill="none" stroke="#fff" stroke-width="1.1"/></svg>
<div class="a" style="left:1153px;top:741px;width:12px;height:13px;background:#5bbdff;border:1px solid #fff"></div>
<svg class="a" style="left:1176px;top:739px" width="15" height="18" viewBox="0 0 15 18"><g fill="none" stroke="#fff" stroke-width="1"><path d="M3 2 Q7.5 0.3 12 2"/><path d="M3 16 Q7.5 17.7 12 16"/><rect x="2" y="5.5" width="8" height="7" rx="1.5"/><path d="M10 7.5 L13 6 V12 L10 10.5"/></g></svg>
<svg class="a" style="left:1201px;top:742px" width="15" height="14" viewBox="0 0 15 14"><g fill="none" stroke="#fff" stroke-width="1"><path d="M1.2 13 A12 12 0 0 1 13.2 1"/><path d="M4.2 13 A9 9 0 0 1 13.2 4"/><path d="M7.2 13 A6 6 0 0 1 13.2 7"/></g><circle cx="12" cy="12" r="1.4" fill="#fff"/></svg>
<svg class="a" style="left:1222px;top:741px" width="18" height="15" viewBox="0 0 18 15"><path d="M1.5 4.8 H4 L7.8 1.2 V13.8 L4 10.2 H1.5 Z" fill="none" stroke="#fff" stroke-width="1"/><path d="M10.3 5 Q11.8 7.5 10.3 10" fill="none" stroke="#fff" stroke-width="1"/><path d="M13.6 1.6 Q17.6 7.5 13.6 13.4" fill="none" stroke="#7d8388" stroke-width="1"/></svg>
<div class="a" style="left:1249px;top:732px;font-size:12px;line-height:14px;color:#f0f0f0;letter-spacing:-0.3px">09:19 p. m.</div>
<div class="a" style="left:1249px;top:750px;font-size:12px;line-height:14px;color:#f0f0f0;letter-spacing:-0.42px">19/05/2021</div>
<svg class="a" style="left:1324px;top:739px" width="18" height="18" viewBox="0 0 18 18"><path d="M1.5 1.5 H16.5 V13.5 H10 L8 16 L6 13.5 H1.5 Z" fill="none" stroke="#fff" stroke-width="1.1"/></svg>
<div class="a" style="left:1361px;top:728px;width:1px;height:40px;background:#5d666d"></div>
</body></html>
